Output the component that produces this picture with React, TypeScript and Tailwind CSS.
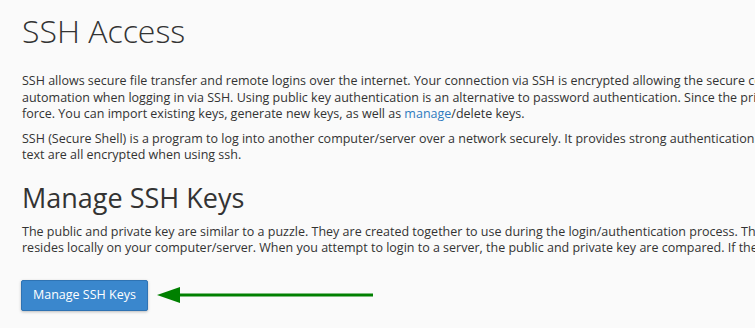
export default function App() {
  return (
    <div className="w-[755px] h-[328px] overflow-hidden bg-[#fafafa] text-[#333] font-['Open_Sans',sans-serif]">
      <div className="pl-[22px] pt-[8px]">
        <h1 className="text-[32px] font-light leading-[46px] whitespace-nowrap">SSH Access</h1>
        <div className="mt-[19px] text-[12.5px] leading-[16.5px] whitespace-nowrap">
          <div>SSH allows secure file transfer and remote logins over the internet. Your connection via SSH is encrypted allowing the secure connection of data. It is</div>
          <div>automation when logging in via SSH. Using public key authentication is an alternative to password authentication. Since the private key must be kept secret, brute</div>
          <div>
            force. You can import existing keys, generate new keys, as well as <span className="text-[#2f7bbf]">manage</span>/delete keys.
          </div>
        </div>
        <div className="mt-[8px] text-[12.5px] leading-[16px] whitespace-nowrap">
          <div>SSH (Secure Shell) is a program to log into another computer/server over a network securely. It provides strong authentication and secure communications</div>
          <div>text are all encrypted when using ssh.</div>
        </div>
        <h2 className="mt-[18px] text-[27px] leading-[34px] whitespace-nowrap">Manage SSH Keys</h2>
        <div className="mt-[9px] text-[12.5px] leading-[16px] whitespace-nowrap">
          <div>The public and private key are similar to a puzzle. They are created together to use during the login/authentication process. The public key</div>
          <div>resides locally on your computer/server. When you attempt to login to a server, the public and private key are compared. If they match, you</div>
        </div>
        <div className="mt-[24px] flex items-center">
          <button className="h-[31px] px-[11px] -ml-[1px] bg-[#3a87cd] border border-[#2f73b3] rounded-[2px] text-white text-[12.5px] shadow-[0_1px_3px_rgba(0,0,0,0.25)] whitespace-nowrap">
            Manage SSH Keys
          </button>
          <svg width="230" height="20" viewBox="0 0 230 20" className="ml-[7px]">
            <polygon points="2,10 25,2 25,18" fill="#008000" />
            <line x1="24" y1="10" x2="218" y2="10" stroke="#008000" strokeWidth="3" />
          </svg>
        </div>
      </div>
    </div>
  );
}
